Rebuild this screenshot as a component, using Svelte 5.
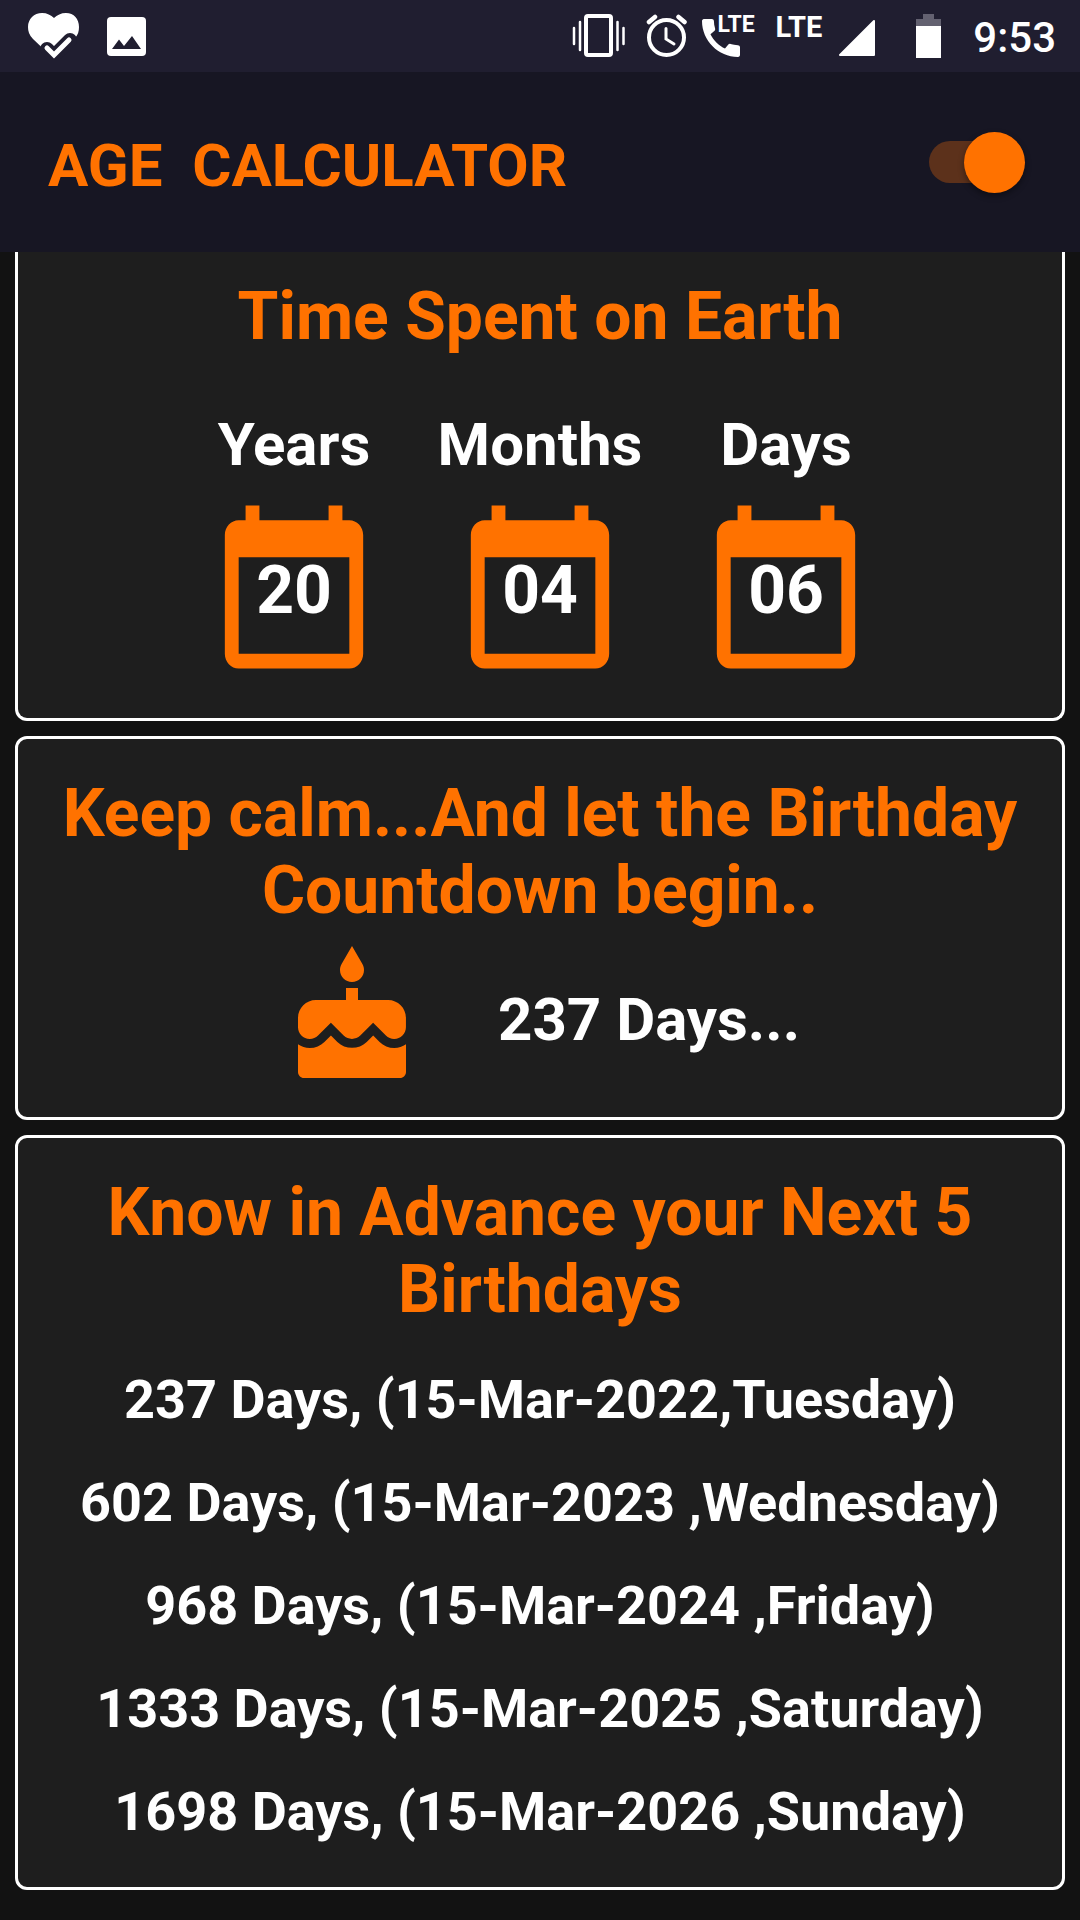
<script>
  let darkMode = $state(true);

  const age = [
    { label: 'Years', value: '20' },
    { label: 'Months', value: '04' },
    { label: 'Days', value: '06' }
  ];

  const birthdays = [
    '237 Days, (15-Mar-2022,Tuesday)',
    '602 Days, (15-Mar-2023 ,Wednesday)',
    '968 Days, (15-Mar-2024 ,Friday)',
    '1333 Days, (15-Mar-2025 ,Saturday)',
    '1698 Days, (15-Mar-2026 ,Sunday)'
  ];

  const title = 'AGE  CALCULATOR';
</script>

<div class="screen">
  <div class="status">
    <div class="notifications">
      <svg width="51" height="46" viewBox="28 13 51 46" aria-hidden="true">
        <path fill="#fff" d="M54 59 33 39C29 35 28 31 28 27c0-8 6-14 14-14 5 0 9 2 12 5 3-3 7-5 12-5 8 0 13 6 13 14 0 4-1 8-4 11z" />
        <path class="gap" d="M47 49l7 7 16-16" />
        <path class="tick" d="M47 48l7 7 15-15" />
      </svg>
      <svg width="39" height="39" viewBox="0 0 39 39" aria-hidden="true">
        <rect width="39" height="39" rx="4" fill="#fff" />
        <path fill="#201e30" d="M5 32l7-9.500 5 6.500 8-10 9 13z" />
      </svg>
    </div>
    <div class="system">
      <svg class="vibrate" width="54" height="44" viewBox="572 15 54 44" aria-hidden="true">
        <rect x="586" y="17" width="25" height="39" rx="2" fill="none" stroke="#fff" stroke-width="4" />
        <path d="M580 23v28M574 29v16M617.500 23v28M623.500 29v16" stroke="#fff" stroke-width="2.500" stroke-linecap="round" />
      </svg>
      <svg class="alarm" width="42" height="44" viewBox="646 15 42 44" aria-hidden="true">
        <g fill="none" stroke="#fff" stroke-linecap="round">
          <circle cx="666.500" cy="38.500" r="17.500" stroke-width="4" />
          <path d="M649 23l6-5M678.500 18l6 5" stroke-width="4.500" />
          <path d="M666 29.500V40l8 5" stroke-width="3" />
        </g>
      </svg>
      <div class="call">
        <svg width="38" height="38" viewBox="3 3 18 18" aria-hidden="true">
          <path fill="#fff" d="M20.010 15.380c-1.230 0-2.420-.2-3.530-.56-.35-.12-.74-.03-1.010.24l-1.570 1.970c-2.830-1.350-5.480-3.900-6.890-6.830l1.950-1.660c.27-.28.35-.67.24-1.020-.37-1.110-.56-2.300-.56-3.530 0-.54-.45-.99-.99-.99H4.190C3.650 3 3 3.240 3 3.990 3 13.280 10.730 21 20.010 21c.71 0 .99-.63.99-1.180v-3.450c0-.54-.45-.99-.99-.99z" />
        </svg>
        <span>LTE</span>
      </div>
      <span class="network">LTE</span>
      <svg class="signal" width="38" height="38" viewBox="0 0 38 38" aria-hidden="true">
        <path fill="#fff" stroke="#fff" stroke-width="2" stroke-linejoin="round" d="M36 2v34H2z" />
      </svg>
      <svg class="battery" width="25" height="44" viewBox="0 0 25 44" aria-hidden="true">
        <path fill="#636170" d="M7 0h11v5h7v8H0V5h7z" />
        <path fill="#fff" d="M0 12h25v32H0z" />
      </svg>
      <time>9:53</time>
    </div>
  </div>

  <header>
    <h1>{title}</h1>
    <input type="checkbox" role="switch" aria-label="Dark mode" bind:checked={darkMode} />
  </header>

  <main>
    <section class="card spent">
      <h2>Time Spent on Earth</h2>
      <div class="units">
        {#each age as unit}
          <div class="unit">
            <span class="label">{unit.label}</span>
            <div class="calendar">
              <svg viewBox="0 0 24 24" preserveAspectRatio="none" aria-hidden="true">
                <path d="M20 3h-1V1h-2v2H7V1H5v2H4c-1.100 0-2 .9-2 2v16c0 1.100.9 2 2 2h16c1.100 0 2-.9 2-2V5c0-1.100-.9-2-2-2zm0 18H4V8h16v13z" />
              </svg>
              <span class="value">{unit.value}</span>
            </div>
          </div>
        {/each}
      </div>
    </section>

    <section class="card countdown">
      <h2>Keep calm...And let the Birthday Countdown begin..</h2>
      <div class="remaining">
        <svg width="144" height="144" viewBox="0 0 24 24" aria-hidden="true">
          <path d="M12 6c1.110 0 2-.9 2-2 0-.38-.1-.73-.29-1.030L12 0l-1.710 2.970c-.19.3-.29.65-.29 1.030 0 1.100.9 2 2 2zm4.600 9.990l-1.070-1.070-1.080 1.070c-1.300 1.300-3.580 1.310-4.890 0l-1.070-1.070-1.090 1.070C6.750 16.640 5.880 17 4.960 17c-.73 0-1.400-.23-1.960-.61V21c0 .55.45 1 1 1h16c.55 0 1-.45 1-1v-4.610c-.56.38-1.230.61-1.960.61-.92 0-1.790-.36-2.440-1.010zM18 9h-5V7h-2v2H6c-1.660 0-3 1.340-3 3v1.540c0 1.080.88 1.960 1.960 1.960.52 0 1.020-.2 1.380-.57l2.140-2.130 2.130 2.130c.74.74 2.030.74 2.770 0l2.140-2.130 2.130 2.130c.37.37.86.57 1.380.57 1.080 0 1.960-.88 1.960-1.960V12C21 10.340 19.660 9 18 9z" />
        </svg>
        <span class="label">237 Days...</span>
      </div>
    </section>

    <section class="card upcoming">
      <h2>Know in Advance your Next 5 Birthdays</h2>
      <ul>
        {#each birthdays as line}
          <li>{line}</li>
        {/each}
      </ul>
    </section>
  </main>
</div>

<style>
  :global(body) {
    margin: 0;
    background: #121212;
  }

  .screen {
    min-height: 100vh;
    box-sizing: border-box;
    background: #121212;
    color: #fff;
    font-family: Roboto, 'Liberation Sans', sans-serif;
    font-weight: 700;
  }

  svg {
    display: block;
    flex: none;
  }

  .status {
    display: flex;
    align-items: center;
    justify-content: space-between;
    height: 72px;
    padding: 0 24px 0 28px;
    background: #201e30;
  }

  .notifications {
    display: flex;
    align-items: center;
    gap: 28px;
  }

  .gap {
    fill: none;
    stroke: #201e30;
    stroke-width: 14;
    stroke-linejoin: round;
    stroke-linecap: round;
  }

  .tick {
    fill: none;
    stroke: #fff;
    stroke-width: 5;
    stroke-linecap: round;
  }

  .system {
    display: flex;
    align-items: center;
  }

  .alarm {
    margin-left: 20px;
  }

  .call {
    position: relative;
    width: 56px;
    margin: 4px 0 0 14px;
  }

  .call span {
    position: absolute;
    top: -7px;
    left: 16px;
    font-size: 23px;
    line-height: 26px;
  }

  .network {
    align-self: flex-start;
    margin-left: 18px;
    font-size: 29px;
    line-height: 34px;
  }

  .signal {
    margin: 4px 0 0 16px;
  }

  .battery {
    margin-left: 40px;
  }

  time {
    padding-top: 3px;
    margin-left: 32px;
    font-size: 42px;
    font-weight: 500;
    line-height: 50px;
  }

  header {
    display: flex;
    align-items: center;
    justify-content: space-between;
    height: 180px;
    padding: 0 55px 0 48px;
    background: #171623;
  }

  h1,
  h2 {
    margin: 0;
    color: #ff7200;
    font-weight: 700;
  }

  h1 {
    padding-top: 8px;
    font-size: 60px;
    line-height: 70px;
    white-space: pre;
  }

  input {
    appearance: none;
    display: grid;
    align-items: center;
    width: 96px;
    height: 61px;
    margin: 0;
    cursor: pointer;
  }

  input::before,
  input::after {
    content: '';
    grid-area: 1 / 1;
  }

  input::before {
    width: 84px;
    height: 42px;
    border-radius: 21px;
    background: #5c311b;
  }

  input::after {
    width: 61px;
    height: 61px;
    border-radius: 50%;
    background: #ff7200;
    box-shadow: 0 3px 6px rgb(0 0 0 / 40%);
  }

  input:checked::after {
    justify-self: end;
  }

  main {
    display: flex;
    flex-direction: column;
    gap: 15px;
    padding: 0 15px 30px;
  }

  .card {
    border: 3px solid #fff;
    border-radius: 12px;
    background: #1e1e1e;
    text-align: center;
  }

  h2 {
    font-size: 66px;
    line-height: 77px;
  }

  .label {
    font-size: 60px;
    line-height: 70px;
  }

  .spent {
    padding: 26px 30px 42px;
    border-top: 0;
    border-radius: 0 0 12px 12px;
  }

  .units {
    display: flex;
    justify-content: center;
    margin-top: 55px;
  }

  .unit {
    display: flex;
    flex-direction: column;
    align-items: center;
    gap: 18px;
    width: 246px;
  }

  .calendar {
    display: grid;
    place-items: center;
  }

  .calendar svg,
  .value {
    grid-area: 1 / 1;
  }

  .calendar svg {
    width: 166px;
    height: 178px;
  }

  .calendar path,
  .remaining path {
    fill: #ff7200;
  }

  .value {
    padding-top: 6px;
    font-size: 66px;
    line-height: 77px;
  }

  .countdown {
    padding: 36px 30px 27px;
  }

  .remaining {
    display: flex;
    align-items: center;
    justify-content: center;
    gap: 74px;
    margin-top: 17px;
  }

  .remaining .label {
    padding-top: 4px;
  }

  .upcoming {
    padding: 36px 30px 44px;
  }

  ul {
    display: flex;
    flex-direction: column;
    gap: 40px;
    margin: 40px 0 0;
    padding: 0;
    list-style: none;
    font-size: 54px;
    line-height: 63px;
  }
</style>
